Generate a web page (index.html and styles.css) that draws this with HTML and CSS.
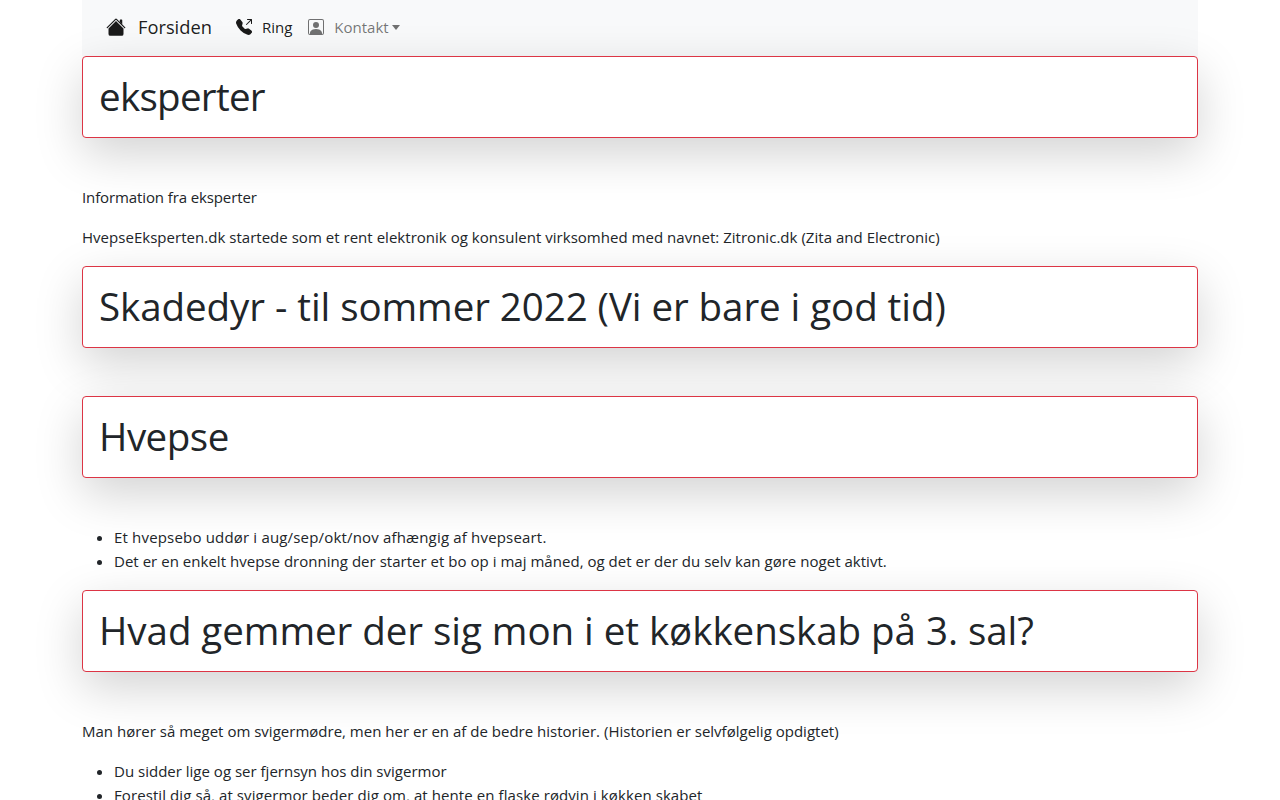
FILE: index.html
```html
<!DOCTYPE html>
<html lang="da">
<head>
<meta charset="utf-8">
<title>eksperter</title>
<link rel="stylesheet" href="styles.css">
</head>
<body>
<div class="container">
<nav class="navbar">
<a class="brand" href="#"><svg class="icon icon-brand" viewBox="0 0 16 16" fill="currentColor"><path fill-rule="evenodd" d="m8 3.293 6 6V13.5a1.5 1.5 0 0 1-1.5 1.5h-9A1.5 1.5 0 0 1 2 13.5V9.293l6-6zm5-.793V6l-2-2V2.5a.5.5 0 0 1 .5-.5h1a.5.5 0 0 1 .5.5z"/><path fill-rule="evenodd" d="M7.293 1.5a1 1 0 0 1 1.414 0l6.647 6.646a.5.5 0 0 1-.708.708L8 2.207 1.354 8.854a.5.5 0 1 1-.708-.708L7.293 1.5z"/></svg>Forsiden</a>
<a class="nav-link nav-dark" href="#"><svg class="icon" viewBox="0 0 16 16" fill="currentColor"><path fill-rule="evenodd" d="M1.885.511a1.745 1.745 0 0 1 2.61.163L6.29 2.98c.329.423.445.974.315 1.494l-.547 2.19a.678.678 0 0 0 .178.643l2.457 2.457a.678.678 0 0 0 .644.178l2.189-.547a1.745 1.745 0 0 1 1.494.315l2.306 1.794c.829.645.905 1.87.163 2.611l-1.034 1.034c-.74.74-1.846 1.065-2.877.702a18.634 18.634 0 0 1-7.01-4.42 18.634 18.634 0 0 1-4.42-7.009c-.362-1.03-.037-2.137.703-2.877L1.885.511zM11 .5a.5.5 0 0 1 .5-.5h4a.5.5 0 0 1 .5.5v4a.5.5 0 0 1-1 0V1.707l-4.146 4.147a.5.5 0 0 1-.708-.708L14.293 1H11.5a.5.5 0 0 1-.5-.5z"/></svg>Ring</a>
<a class="nav-link" href="#"><svg class="icon" viewBox="0 0 16 16" fill="currentColor"><path d="M11 6a3 3 0 1 1-6 0 3 3 0 0 1 6 0z"/><path d="M2 0a2 2 0 0 0-2 2v12a2 2 0 0 0 2 2h12a2 2 0 0 0 2-2V2a2 2 0 0 0-2-2H2zm12 1a1 1 0 0 1 1 1v12a1 1 0 0 1-1 1v-1c0-1-1-4-6-4s-6 3-6 4v1a1 1 0 0 1-1-1V2a1 1 0 0 1 1-1h12z"/></svg>Kontakt<span class="caret"></span></a>
</nav>
<h1 class="heading track-h1">eksperter</h1>
<p class="track-t1">Information fra eksperter</p>
<p class="track-t2">HvepseEksperten.dk startede som et rent elektronik og konsulent virksomhed med navnet: Zitronic.dk (Zita and Electronic)</p>
<h1 class="heading track-h2">Skadedyr - til sommer 2022 (Vi er bare i god tid)</h1>
<h1 class="heading track-h3">Hvepse</h1>
<ul>
<li class="track-t3">Et hvepsebo uddør i aug/sep/okt/nov afhængig af hvepseart.</li>
<li class="track-t2">Det er en enkelt hvepse dronning der starter et bo op i maj måned, og det er der du selv kan gøre noget aktivt.</li>
</ul>
<h1 class="heading track-h4">Hvad gemmer der sig mon i et køkkenskab på 3. sal?</h1>
<p>Man hører så meget om svigermødre, men her er en af de bedre historier. (Historien er selvfølgelig opdigtet)</p>
<ul>
<li>Du sidder lige og ser fjernsyn hos din svigermor</li>
<li class="track-t4">Forestil dig så, at svigermor beder dig om, at hente en flaske rødvin i køkken skabet</li>
</ul>
</div>
</body>
</html>
```
FILE: styles.css
```css
* { box-sizing: border-box; }
html, body { height: 800px; overflow: hidden; }
body {
  margin: 0;
  font-family: "Open Sans", sans-serif;
  font-size: 15.03px;
  line-height: 24px;
  color: #212529;
  background: #fff;
}
.container { width: 1116px; margin: 0 auto; }
.navbar {
  display: flex;
  align-items: center;
  height: 56px;
  padding: 0 0 2px 24px;
  background: #f8f9fa;
}
.brand {
  display: flex;
  align-items: center;
  margin-right: 16px;
  font-size: 18.3px;
  color: rgba(0,0,0,.9);
  text-decoration: none;
}
.icon { width: 16px; height: 16px; margin-right: 10px; flex: none; }
.icon-brand { width: 20px; height: 20px; margin-right: 12px; }
.nav-link {
  display: flex;
  align-items: center;
  padding: 8px;
  color: rgba(0,0,0,.55);
  text-decoration: none;
}
.nav-dark { color: rgba(0,0,0,.9); }
.caret {
  margin-left: 3px;
  border-top: 5px solid;
  border-left: 4px solid transparent;
  border-right: 4px solid transparent;
}
.heading {
  margin: 0 0 48px;
  padding: 15px 16px 17px;
  font-size: 38.5px;
  line-height: 48px;
  font-weight: 400;
  background: #fff;
  border: 1px solid #dc3545;
  border-radius: 4px;
  box-shadow: 0 16px 48px rgba(0,0,0,.175);
}
p, ul { margin: -1px 0 17px; }
ul { padding-left: 32px; }
.track-h1 { letter-spacing: -.7px; }
.track-h2 { letter-spacing: -.06px; }
.track-h3 { letter-spacing: -.5px; }
.track-h4 { letter-spacing: -.04px; }
.track-t1 { letter-spacing: -.12px; }
.track-t2 { letter-spacing: .02px; }
.track-t3 { letter-spacing: .17px; }
.track-t4 { letter-spacing: .08px; }
```
